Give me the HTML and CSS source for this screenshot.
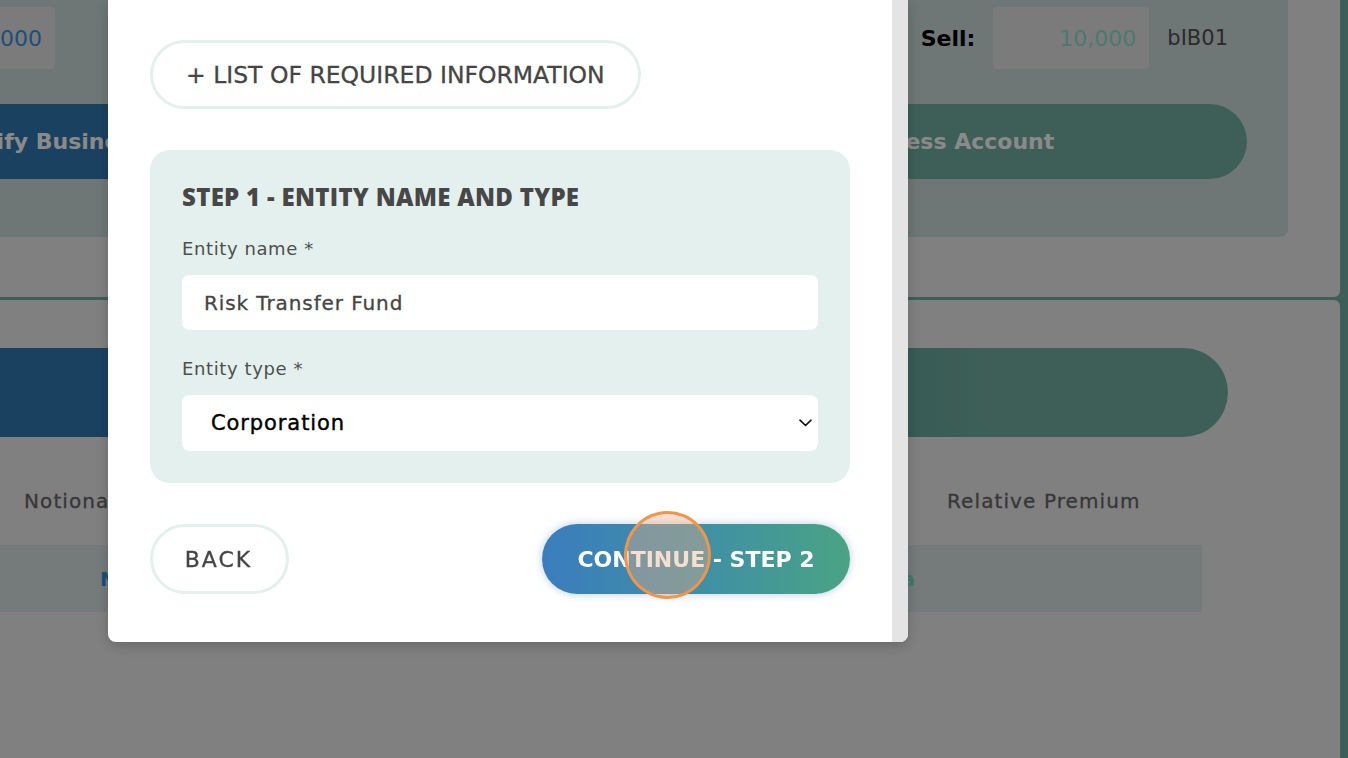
FILE: index.html
```html
<!DOCTYPE html>
<html lang="en">
<head>
<meta charset="utf-8">
<title>Business Account – Step 1</title>
<link rel="stylesheet" href="styles.css">
</head>
<body>
<div class="page">
  <div class="panel panel-top">
    <div class="summary-card">
      <div class="trade-row">
        <div class="amount-box amount-blue">10,000</div>
        <div class="sell-group">
          <span class="sell-label">Sell:</span>
          <div class="amount-box amount-teal">10,000</div>
          <span class="unit">bIB01</span>
        </div>
      </div>
      <div class="action-row">
        <a class="pill pill-blue">Verify Business Account</a>
        <a class="pill pill-green">Open Business Account</a>
      </div>
    </div>
  </div>
  <div class="panel panel-bottom">
    <div class="gradient-bar"></div>
    <div class="table-head">
      <span>Notional</span>
      <span>Premium</span>
      <span>Protection</span>
      <span>Relative Premium</span>
    </div>
    <div class="table-row">
      <span class="cell-blue">Nexus Pool</span>
      <span></span>
      <span class="cell-teal">Alpha</span>
      <span></span>
    </div>
  </div>
</div>

<div class="backdrop"></div>

<div class="modal">
  <div class="modal-body">
    <button class="btn-outline btn-list">+ LIST OF REQUIRED INFORMATION</button>

    <section class="step">
      <h2 class="step-title">STEP 1 - ENTITY NAME AND TYPE</h2>
      <label class="field-label">Entity name *</label>
      <div class="text-input">Risk Transfer Fund</div>
      <label class="field-label field-label-2">Entity type *</label>
      <div class="select-input">
        <span>Corporation</span>
        <svg class="chevron" width="13" height="8" viewBox="0 0 13 8"><path d="M1 1.2l5.5 5.3 5.5-5.3" fill="none" stroke="#111" stroke-width="1.6" stroke-linecap="round" stroke-linejoin="round"/></svg>
      </div>
    </section>

    <div class="actions">
      <button class="btn-outline btn-back">BACK</button>
      <button class="btn-continue">CONTINUE - STEP 2<span class="click-ring"></span></button>
    </div>
  </div>
  <div class="scrollbar"></div>
</div>
</body>
</html>
```

FILE: styles.css
```css
* { box-sizing: border-box; }

html, body {
  margin: 0;
  height: 100%;
}

body {
  background: #73aea5;
  overflow: hidden;
  font-family: "DejaVu Sans", "Open Sans", sans-serif;
}

.page {
  margin-left: -160px;
  width: 1500px;
}

.panel {
  background: #ededed;
}

.panel-top {
  height: 297px;
  padding-right: 52px;
  border-bottom-right-radius: 6px;
}

.summary-card {
  height: 237px;
  background: #ccdcd9;
  border-bottom-right-radius: 8px;
  padding: 7px 60px 0 59px;
}

.trade-row {
  display: flex;
  justify-content: space-between;
  align-items: center;
  height: 62px;
}

.amount-box {
  width: 156px;
  height: 62px;
  background: #e4e4e4;
  border-radius: 4px;
  display: flex;
  align-items: center;
  justify-content: flex-end;
  padding-right: 13px;
  font-size: 22px;
}

.amount-blue { color: #3692e0; }
.amount-teal { color: #86e3c9; }

.sell-group {
  display: flex;
  align-items: center;
}

.sell-label {
  font-size: 22px;
  font-weight: 700;
  color: #000;
  margin-right: 18px;
}

.unit {
  font-size: 21px;
  color: #505050;
  margin-left: 18px;
}

.action-row {
  display: flex;
  justify-content: space-between;
  margin-top: 35px;
  padding-right: 41px;
  margin-right: -60px;
}

.pill {
  height: 75px;
  display: flex;
  align-items: center;
  font-size: 22px;
  font-weight: 700;
  color: #fff;
}

.pill-blue {
  width: 721px;
  background: #3278b4;
  padding-left: 56px;
}

.pill-green {
  width: 587px;
  background: #71b0a1;
  border-radius: 0 38px 38px 0;
  padding-left: 104px;
}

.panel-bottom {
  margin-top: 3px;
  height: 470px;
  border-top-right-radius: 6px;
  padding-top: 48px;
}

.gradient-bar {
  margin-left: 59px;
  margin-right: 112px;
  height: 89px;
  border-radius: 0 45px 45px 0;
  background: linear-gradient(90deg, #3278b4 0%, #3278b4 48%, #62a49c 72%, #71b0a1 82%, #71b0a1 100%);
}

.table-head {
  display: grid;
  grid-template-columns: 270px 330px 323px auto;
  margin-top: 48px;
  height: 32px;
  line-height: 32px;
  padding-left: 184px;
  font-size: 20px;
  letter-spacing: 1.1px;
  color: #666;
  -webkit-text-stroke: 0.3px #666;
}

.table-row {
  display: grid;
  grid-template-columns: 300px 300px 215px auto;
  align-items: center;
  margin-top: 28px;
  margin-left: 59px;
  margin-right: 138px;
  height: 67px;
  background: #d9e2e2;
  padding-left: 201px;
  font-size: 20px;
  font-weight: 700;
}

.cell-blue { color: #3692e0; }
.cell-teal { color: #75e2c4; text-align: right; }

.backdrop {
  position: fixed;
  inset: 0;
  background: rgba(0, 0, 0, 0.46);
}

.modal {
  position: fixed;
  left: 108px;
  top: 0;
  width: 800px;
  height: 642px;
  background: #fff;
  border-radius: 0 0 8px 8px;
  display: flex;
  box-shadow: 0 4px 14px rgba(0, 0, 0, 0.2);
}

.modal-body {
  flex: 1;
  padding: 40px 42px 0 42px;
  display: flex;
  flex-direction: column;
  align-items: flex-start;
}

.scrollbar {
  width: 16px;
  background: #e4e4e4;
  border-bottom-right-radius: 8px;
}

button {
  font-family: inherit;
  cursor: pointer;
}

.btn-outline {
  background: #fff;
  border: 3px solid #e4f0ed;
  color: #454545;
}

.btn-list {
  height: 69px;
  border-radius: 35px;
  padding: 0 33px;
  font-size: 23.5px;
  -webkit-text-stroke: 0.3px #454545;
}

.step {
  margin-top: 41px;
  width: 700px;
  background: #e4f0ed;
  border-radius: 20px;
  padding: 30px 32px 32px;
}

.step-title {
  margin: 0;
  font-family: "Open Sans", sans-serif;
  font-size: 24px;
  line-height: 34px;
  font-weight: 800;
  color: #474747;
  letter-spacing: 0.3px;
}

.field-label {
  display: block;
  margin-top: 22px;
  height: 26px;
  line-height: 26px;
  font-size: 18px;
  letter-spacing: 0.6px;
  color: #4f4f4f;
}

.field-label-2 {
  margin-top: 26px;
}

.text-input,
.select-input {
  margin-top: 13px;
  background: #fff;
  border-radius: 8px;
  display: flex;
  align-items: center;
  font-size: 20px;
}

.text-input {
  height: 55px;
  padding-left: 22px;
  color: #454545;
  letter-spacing: 0.9px;
  -webkit-text-stroke: 0.3px #454545;
}

.select-input {
  height: 56px;
  padding: 0 6px 0 29px;
  color: #000;
  justify-content: space-between;
  font-size: 21px;
  letter-spacing: 0.9px;
  -webkit-text-stroke: 0.4px #000;
}

.actions {
  margin-top: 41px;
  width: 700px;
  display: flex;
  justify-content: space-between;
}

.btn-back {
  width: 139px;
  height: 70px;
  border-radius: 35px;
  font-size: 22px;
  letter-spacing: 2px;
  padding-left: 4px;
  -webkit-text-stroke: 0.3px #454545;
}

.btn-continue {
  position: relative;
  width: 308px;
  height: 70px;
  border: none;
  border-radius: 35px;
  background: linear-gradient(90deg, #3a7dbd 0%, #3f8fa7 50%, #4aa383 100%);
  color: #fff;
  font-size: 22px;
  font-weight: 700;
  box-shadow: 0 0 9px rgba(58, 110, 170, 0.35);
}

.click-ring {
  position: absolute;
  left: 82px;
  top: -13px;
  width: 87px;
  height: 88px;
  border-radius: 50%;
  border: 3px solid #f0954a;
  background: rgba(235, 175, 135, 0.4);
}
```
